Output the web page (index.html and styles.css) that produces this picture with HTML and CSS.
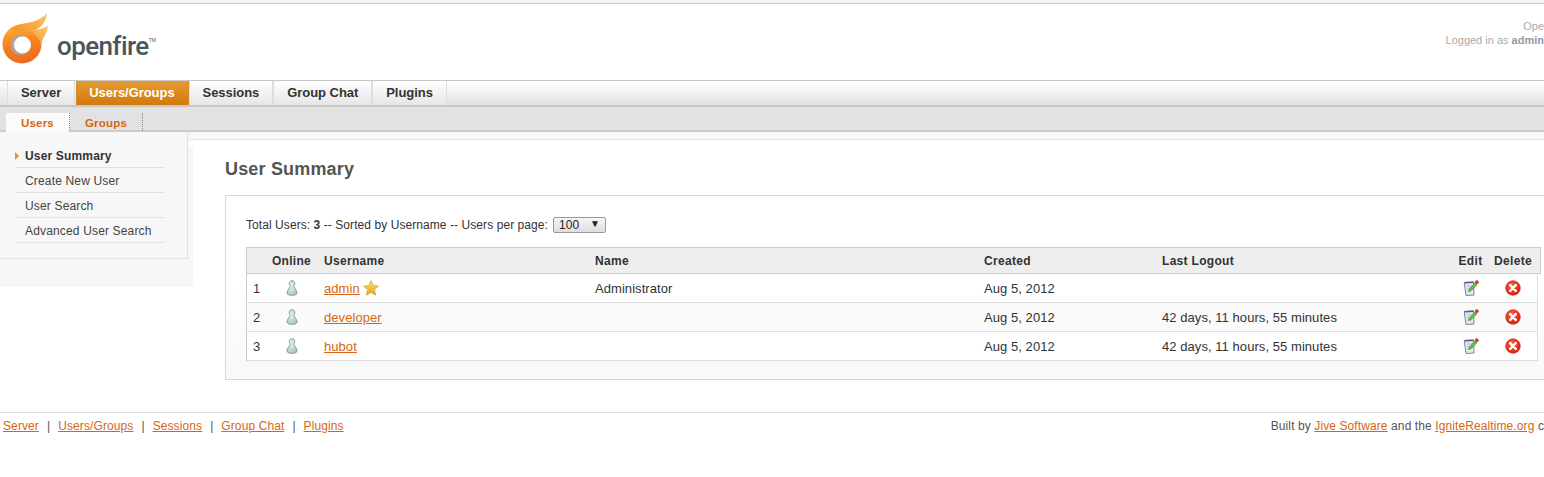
FILE: index.html
```html
<!DOCTYPE html>
<html lang="en">
<head>
<meta charset="utf-8">
<title>Openfire Admin Console: User Summary</title>
<link rel="stylesheet" href="styles.css">
</head>
<body>
<svg class="defs" width="0" height="0" aria-hidden="true">
  <defs>
    <linearGradient id="ring" x1="0.3" y1="0" x2="0.5" y2="1"><stop offset="0" stop-color="#fbb040"/><stop offset="0.5" stop-color="#f5811f"/><stop offset="1" stop-color="#ee6a1f"/></linearGradient>
    <linearGradient id="tongue" x1="0" y1="1" x2="1" y2="0"><stop offset="0" stop-color="#f68e23"/><stop offset="1" stop-color="#fdc866"/></linearGradient>
    <radialGradient id="person" cx="0.4" cy="0.35" r="0.8"><stop offset="0" stop-color="#e8f5f3"/><stop offset="1" stop-color="#9dbbb9"/></radialGradient>
    <linearGradient id="star" x1="0" y1="0" x2="0" y2="1"><stop offset="0" stop-color="#fbdc62"/><stop offset="1" stop-color="#e5a818"/></linearGradient>
    <radialGradient id="red" cx="0.4" cy="0.3" r="0.8"><stop offset="0" stop-color="#ff5a3c"/><stop offset="1" stop-color="#d31a08"/></radialGradient>
    <symbol id="i-person" viewBox="0 0 12 16"><path d="M6 .7C4.300.7 3.200 1.900 3.200 3.500c0 1 .5 1.900 1.200 2.400-.3 1.500-3.400 4.200-3.400 7 0 1.800 2.300 2.400 5 2.400s5-.6 5-2.400c0-2.800-3.100-5.500-3.400-7 .7-.5 1.200-1.400 1.200-2.400C8.800 1.900 7.700.7 6 .7z" fill="url(#person)" stroke="#7f9797" stroke-width=".9"/></symbol>
    <symbol id="i-star" viewBox="0 0 16 16"><path d="M8 .6l2.200 5 5.300.5-4 3.600 1.200 5.500L8 12.400l-4.700 2.800 1.200-5.500-4-3.600 5.300-.5z" fill="url(#star)" stroke="#d9a441" stroke-width=".7"/></symbol>
    <symbol id="i-edit" viewBox="0 0 16 16"><path d="M1.200 2.500l9.300-.5.500 13-8 .5z" fill="#e3e6f0" stroke="#7d84a0"/><path d="M1.500 2.700l9-.5" stroke="#55607f" stroke-width="1.600"/><path d="M4 6h5M4.300 8.500h3M4.600 11h3" stroke="#a9afc4" stroke-width=".8"/><path d="M5.500 11.500l1-2.800 5.500-5.700 2 1.800-5.600 5.700z" fill="#5fc23c" stroke="#3c8f25" stroke-width=".6"/><circle cx="13.800" cy="2.200" r="1.900" fill="#e0353a"/></symbol>
    <symbol id="i-delete" viewBox="0 0 16 16"><circle cx="8" cy="8" r="7.300" fill="url(#red)" stroke="#c2200f" stroke-width=".6"/><path d="M5.200 5.200l5.600 5.600M10.800 5.200l-5.600 5.600" stroke="#fff" stroke-width="2.500" stroke-linecap="round"/></symbol>
  </defs>
</svg>
<div class="page">
  <div class="topline"></div>
  <header class="header">
    <div class="logo">
      <svg class="flame" width="50" height="54" viewBox="0 0 50 54" aria-hidden="true">
        <circle cx="22" cy="32" r="19.500" fill="url(#ring)"/>
        <path d="M10 18C18 8 34 15 47 1c-1 11-9 19-20 18-6-1-12-1-17-1z" fill="url(#tongue)"/>
        <path d="M24 16c8 3 17 2 24-2-1 9-6 11-7 20-.5-6-5-13-17-18z" fill="url(#tongue)"/>
        <circle cx="20.500" cy="33" r="10" fill="#a8a8a8"/>
        <circle cx="22.500" cy="33" r="8.500" fill="#fff"/>
      </svg>
      <span class="wordmark">openfire<sup class="tm">TM</sup></span>
    </div>
    <div class="info">
      <div>Ope</div>
      <div>Logged in as <b>admin</b></div>
    </div>
  </header>
  <nav class="tabs">
    <a class="tab">Server</a>
    <a class="tab active">Users/Groups</a>
    <a class="tab">Sessions</a>
    <a class="tab">Group Chat</a>
    <a class="tab">Plugins</a>
  </nav>
  <nav class="subtabs">
    <a class="subtab current">Users</a>
    <a class="subtab">Groups</a>
  </nav>
  <div class="content">
    <aside class="side">
      <ul class="sidebox">
        <li class="sideitem selected">User Summary</li>
        <li class="sideitem">Create New User</li>
        <li class="sideitem">User Search</li>
        <li class="sideitem">Advanced User Search</li>
      </ul>
    </aside>
    <main class="main">
      <h1 class="title">User Summary</h1>
      <section class="box">
        <div class="summary">
          <span>Total Users: <b>3</b> -- Sorted by Username -- Users per page:</span>
          <span class="select"><span>100</span><span class="arrow">▼</span></span>
        </div>
        <table class="users">
          <colgroup>
            <col class="c-num"><col class="c-online"><col class="c-user"><col class="c-name"><col class="c-created"><col class="c-logout"><col class="c-edit"><col class="c-del"><col class="c-end">
          </colgroup>
          <thead>
            <tr><th></th><th class="center">Online</th><th>Username</th><th>Name</th><th>Created</th><th>Last Logout</th><th class="center">Edit</th><th class="center">Delete</th><th></th></tr>
          </thead>
          <tbody>
            <tr>
              <td>1</td><td class="center"><svg class="ic-person"><use href="#i-person"/></svg></td>
              <td><a class="link">admin</a> <svg class="ic-star"><use href="#i-star"/></svg></td>
              <td>Administrator</td><td>Aug 5, 2012</td><td></td>
              <td class="center"><svg class="ic"><use href="#i-edit"/></svg></td>
              <td class="center last"><svg class="ic"><use href="#i-delete"/></svg></td><td class="end"></td>
            </tr>
            <tr class="alt">
              <td>2</td><td class="center"><svg class="ic-person"><use href="#i-person"/></svg></td>
              <td><a class="link">developer</a></td>
              <td></td><td>Aug 5, 2012</td><td>42 days, 11 hours, 55 minutes</td>
              <td class="center"><svg class="ic"><use href="#i-edit"/></svg></td>
              <td class="center last"><svg class="ic"><use href="#i-delete"/></svg></td><td class="end"></td>
            </tr>
            <tr>
              <td>3</td><td class="center"><svg class="ic-person"><use href="#i-person"/></svg></td>
              <td><a class="link">hubot</a></td>
              <td></td><td>Aug 5, 2012</td><td>42 days, 11 hours, 55 minutes</td>
              <td class="center"><svg class="ic"><use href="#i-edit"/></svg></td>
              <td class="center last"><svg class="ic"><use href="#i-delete"/></svg></td><td class="end"></td>
            </tr>
          </tbody>
        </table>
      </section>
    </main>
  </div>
  <footer class="footer">
    <div class="footlinks">
      <a class="link">Server</a><span class="sep">|</span><a class="link">Users/Groups</a><span class="sep">|</span><a class="link">Sessions</a><span class="sep">|</span><a class="link">Group Chat</a><span class="sep">|</span><a class="link">Plugins</a>
    </div>
    <div class="credit">Built by <a class="link">Jive Software</a> and the <a class="link">IgniteRealtime.org</a> c</div>
  </footer>
</div>
</body>
</html>
```
FILE: styles.css
```css
html, body { margin: 0; padding: 0; background: #fff; }
body { width: 1544px; height: 477px; overflow: hidden; font-family: "Liberation Sans", Arial, sans-serif; color: #333; }
.defs { position: absolute; }
.page { width: 1544px; }
.topline { height: 3px; background: #f4f4f4; border-bottom: 1px solid #c8c8c8; }

.header { height: 76px; display: flex; justify-content: space-between; box-sizing: border-box; }
.logo { display: flex; align-items: flex-start; padding-top: 8px; }
.flame { margin-left: 0; }
.wordmark { font-family: Roboto, sans-serif; font-weight: 500; font-size: 26px; line-height: 30px; color: #4b555a; margin: 19px 0 0 7px; letter-spacing: -0.6px; }
.tm { font-size: 5px; line-height: 0; vertical-align: 13px; font-family: "Liberation Sans", sans-serif; letter-spacing: 0; }
.info { text-align: right; font-size: 11px; line-height: 14px; color: #aaa; padding-top: 15px; }
.info b { color: #999; }

.tabs { height: 24px; display: flex; gap: 1px; padding-left: 7px; border-top: 1px solid #c8c8c8; border-bottom: 2px solid #c8c8c8; background: linear-gradient(#fff, #e2e2e2); }
.tab { display: flex; align-items: center; padding: 0 13px 2px; font-size: 13px; letter-spacing: -.05px; font-weight: bold; color: #333; background: linear-gradient(#fff, #e6e6e6); border-left: 1px solid #ddd; border-right: 1px solid #ddd; margin-left: -1px; }
.tab:first-child { margin-left: 0; }
.tab.active { color: #fff; background: linear-gradient(#e59a33, #d27a0c); border-color: #d98a20; margin-left: 0; padding: 0 13px 2px 12px; }

.subtabs { height: 23px; display: flex; align-items: flex-end; padding-left: 6px; background: #e2e2e2; border-bottom: 2px solid #ccc; }
.subtab { height: 18px; line-height: 20px; padding: 0 15px; font-size: 11.500px; font-weight: bold; color: #d9660f; letter-spacing: .2px; border-right: 1px dotted #808890; margin-bottom: -1px; }
.subtab.current { background: #fbfbfb; height: 19px; margin-bottom: -2px; }

.content { display: flex; background: linear-gradient(#f7f7f7 7px, #fff 7px); }
.side { width: 193px; height: 155px; flex: none; background: #f7f7f7; }
.sidebox { list-style: none; margin: 0; padding: 11px 22px 15px 15px; width: 188px; box-sizing: border-box; border-right: 1px solid #e2e2e2; border-bottom: 1px solid #e2e2e2; }
.sideitem { height: 25px; box-sizing: border-box; border-bottom: 1px solid #e2e2e2; padding-left: 10px; font-size: 12px; letter-spacing: .16px; line-height: 27px; color: #444; }
.sideitem.selected { font-weight: bold; color: #333; position: relative; }
.sideitem.selected::before { content: ""; position: absolute; left: 0; top: 9px; border-left: 4px solid #d99a1c; border-top: 4px solid transparent; border-bottom: 4px solid transparent; }

.main { flex: 1; margin: 7px -12px 0 0; padding: 0 0 32px 32px; background: #fff; border-top: 1px solid #e4e4e4; position: relative; min-width: 0; box-sizing: border-box; }
.main::before { content: ""; position: absolute; left: -4px; top: -1px; width: 4px; height: 6px; background: #fff; border-top: 1px solid #e4e4e4; border-top-left-radius: 4px; }
.title { margin: 18px 0 15px; font-size: 18px; letter-spacing: .17px; line-height: 22px; font-weight: bold; color: #555; }
.box { box-sizing: border-box; height: 185px; border: 1px solid #d8d8d8; background: linear-gradient(#fff 50%, #f8f8f8); padding: 21px 0 0 20px; }
.summary { display: flex; align-items: center; gap: 5px; height: 16px; font-size: 12px; letter-spacing: .07px; color: #333; }
.select { box-sizing: border-box; width: 53px; height: 16px; display: flex; justify-content: space-between; align-items: center; padding: 0 5px; border: 1px solid #999; border-radius: 2px; background: linear-gradient(#f6f6f6, #dedede); color: #222; }
.arrow { font-size: 10px; line-height: 12px; margin-bottom: 2px; }

.users { width: 1295px; margin-top: 14px; table-layout: fixed; border-collapse: separate; border-spacing: 0; font-size: 13px; letter-spacing: .06px; }
.c-num { width: 20px; } .c-online { width: 51px; } .c-user { width: 271px; } .c-name { width: 389px; } .c-created { width: 178px; } .c-logout { width: 298px; } .c-edit { width: 35px; } .c-del { width: 50px; } .c-end { width: 3px; }
.users th { height: 25px; padding: 0 7px; font-size: 12px; letter-spacing: .3px; font-weight: bold; text-align: left; background: #eee; border-top: 1px solid #ccc; border-bottom: 1px solid #ccc; color: #333; }
.users th:first-child { border-left: 1px solid #ccc; }
.users th:last-child { border-right: 1px solid #ccc; padding: 0; }
.users td { height: 28px; padding: 0 7px; background: #fff; border-bottom: 1px solid #ddd; color: #333; }
.users td:first-child { border-left: 1px solid #ccc; padding-left: 6px; }
.users .alt td { background: #fafafa; }
.users td.last { border-right: 1px solid #ddd; }
.users td.end, .users .alt td.end { background: transparent; border: 0; padding: 0; }
.users .center { text-align: center; padding-left: 0; padding-right: 0; }
.link { color: #d9660f; text-decoration: underline; }
.ic, .ic-person { vertical-align: middle; display: inline-block; }
.ic { width: 16px; height: 16px; }
.ic-person { width: 12px; height: 16px; }
.ic-star { display: inline-block; vertical-align: -3px; width: 16px; height: 16px; }

.footer { height: 30px; box-sizing: border-box; padding: 0 0 4px 3px; border-top: 1px solid #ddd; display: flex; justify-content: space-between; align-items: center; font-size: 12px; letter-spacing: .1px; color: #555; }
.sep { margin: 0 8px; }
```
